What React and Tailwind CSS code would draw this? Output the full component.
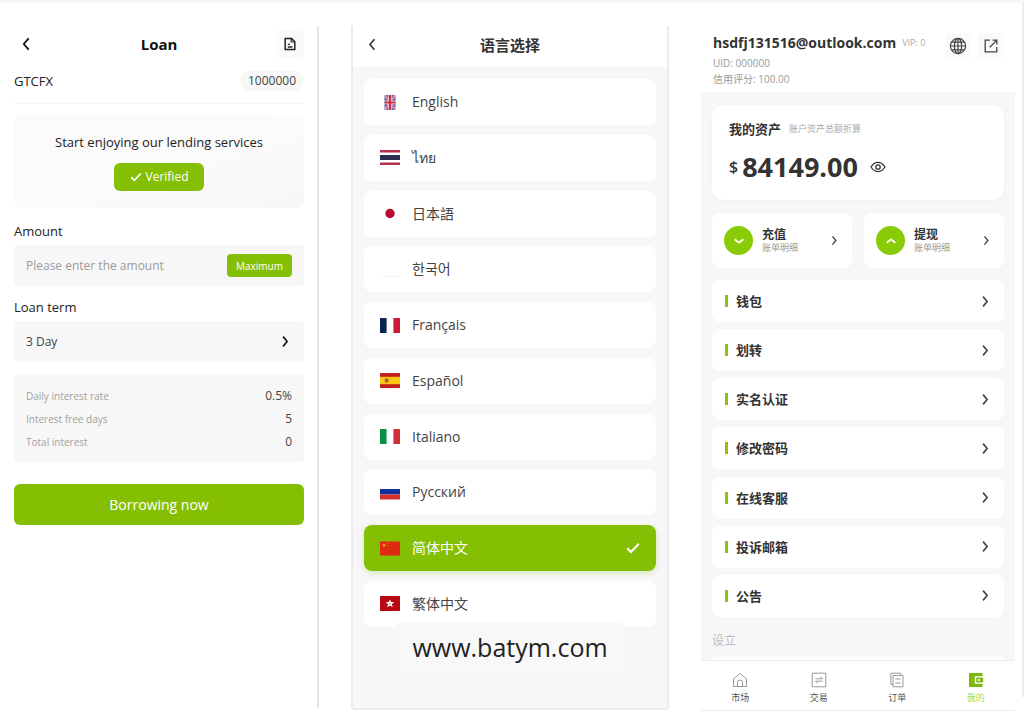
import React, { useState } from "react";

function Chevron({ dir = "right", className = "" }) {
  const d = {
    right: "M5 2 L10 8 L5 14",
    left: "M11 1.5 L5.5 8 L11 14.5",
    down: "M3 6 L8 10 L13 6",
    up: "M3 10 L8 6 L13 10",
  }[dir];
  return (
    <svg viewBox="0 0 16 16" fill="none" stroke="currentColor" strokeWidth="2" className={className} aria-hidden="true">
      <path d={d} />
    </svg>
  );
}

function Check({ className = "" }) {
  return (
    <svg viewBox="0 0 14 12" fill="none" stroke="currentColor" strokeWidth="2" className={className} aria-hidden="true">
      <path d="M1.2 6.2 L5 10 L12.8 1.8" />
    </svg>
  );
}

const flags = {
  en: (
    <g>
      <rect x="4.5" width="11" height="15" rx="1" fill="#5a5c9c" />
      <path d="M5 0.5 L15 14.5 M15 0.5 L5 14.5" stroke="#e9d3e0" strokeWidth="2" />
      <path d="M5 0.5 L15 14.5 M15 0.5 L5 14.5" stroke="#d65a72" strokeWidth="1" />
      <path d="M10 0 V15 M4.5 7.5 H15.5" stroke="#f6e6ea" strokeWidth="3.4" />
      <path d="M10 0 V15 M4.5 7.5 H15.5" stroke="#cf2f4c" strokeWidth="2.2" />
    </g>
  ),
  th: (
    <g>
      <rect width="20" height="2.5" fill="#b8324a" />
      <rect y="5" width="20" height="5" fill="#2d2f50" />
      <rect y="12.5" width="20" height="2.5" fill="#b8324a" />
    </g>
  ),
  ja: <circle cx="10" cy="7.5" r="4.7" fill="#bc0a34" />,
  ko: <rect y="14" width="20" height="1" fill="#f3f3f4" />,
  fr: (
    <g>
      <rect width="6.6" height="15" rx="0.6" fill="#0b2350" />
      <rect x="13.4" width="6.6" height="15" rx="0.6" fill="#ce1a38" />
    </g>
  ),
  es: (
    <g>
      <rect width="20" height="15" rx="0.8" fill="#c0201c" />
      <rect y="3.8" width="20" height="7.4" fill="#fbc514" />
      <rect x="4.6" y="5.4" width="4" height="4.2" rx="1" fill="#b9772a" />
      <rect x="5.8" y="6.4" width="1.4" height="2" fill="#7e4a22" />
    </g>
  ),
  it: (
    <g>
      <rect width="6.6" height="15" rx="0.6" fill="#0a8f47" />
      <rect x="13.4" width="6.6" height="15" rx="0.6" fill="#cd2f3c" />
    </g>
  ),
  ru: (
    <g>
      <rect y="4" width="20" height="5.5" fill="#10309a" />
      <rect y="9.5" width="20" height="5" fill="#d5312c" />
    </g>
  ),
  zh: (
    <g>
      <rect y="0.5" width="20" height="14" rx="0.6" fill="#dd2a11" />
      <path d="M4 2 l0.6 1.5 h1.6 l-1.3 1 l0.5 1.6 l-1.4 -0.9 l-1.4 0.9 l0.5 -1.6 l-1.3 -1 h1.6z" fill="#f7a51c" />
      <circle cx="7.4" cy="2" r="0.5" fill="#f7a51c" />
      <circle cx="8" cy="4.4" r="0.5" fill="#f7a51c" />
    </g>
  ),
  hk: (
    <g>
      <rect width="20" height="15" rx="0.6" fill="#b80a14" />
      <path d="M10 3.4 l1.2 2.7 l3 0.2 l-2.3 1.9 l0.8 3 l-2.7 -1.6 l-2.7 1.6 l0.8 -3 l-2.3 -1.9 l3 -0.2z" fill="#fff" />
      <circle cx="10" cy="7.7" r="0.8" fill="#c96a70" />
    </g>
  ),
};

const languages = [
  ["en", "English"],
  ["th", "ไทย"],
  ["ja", "日本語"],
  ["ko", "한국어"],
  ["fr", "Français"],
  ["es", "Español"],
  ["it", "Italiano"],
  ["ru", "Русский"],
  ["zh", "简体中文"],
  ["hk", "繁体中文"],
];

function LoanScreen() {
  const stats = [
    ["Daily interest rate", "0.5%"],
    ["Interest free days", "5"],
    ["Total interest", "0"],
  ];
  return (
    <section className="mb-[3px] flex flex-col border-r-2 border-[#e6e6e6] pl-[5px] pr-[13px] text-[13px] leading-5 text-[#222]">
      <header className="grid h-9 grid-cols-[28px_1fr_28px] items-center">
        <button aria-label="Back" className="pl-1 text-[#111]">
          <Chevron dir="left" className="h-[14px] w-4" />
        </button>
        <h1 className="text-center text-[15px] font-bold text-[#111]">Loan</h1>
        <button aria-label="Loan records" className="flex size-7 items-center justify-center rounded bg-[#fafafb] text-[#222]">
          <svg viewBox="0 0 14 14" className="size-[14px]" fill="none" stroke="currentColor" strokeWidth="1.5" strokeLinejoin="round">
            <path d="M2.2 1.4 H8.4 L11.8 4.8 V12.6 H2.2 Z" />
            <path d="M8.2 1.6 V5 H11.6" strokeWidth="1.1" />
            <path d="M4.8 7.4 H7 M4.8 10 H9.4" strokeWidth="1.3" />
          </svg>
        </button>
      </header>
      <div className="flex h-[42px] items-center justify-between border-b border-[#f5f5f5] pb-[3px]">
        <span>GTCFX</span>
        <span className="rounded-full bg-[#f7f7f7] px-2 text-[12px] text-[#444]">1000000</span>
      </div>
      <div className="mt-[11px] flex h-[93px] flex-col items-center justify-center gap-[11px] rounded-lg bg-linear-to-br from-[#fafafa] via-[#fbfbfb] to-[#f7f7f7] pb-px">
        <p>Start enjoying our lending services</p>
        <button className="flex h-7 items-center gap-1 rounded-md bg-[#85bf04] px-4 text-[12px] text-white">
          <Check className="h-[10px] w-3" />
          Verified
        </button>
      </div>
      <label htmlFor="amount" className="mt-[13px]">Amount</label>
      <div className="mt-1 flex h-[41px] items-center rounded bg-[#f7f7f7] pl-3 pr-3">
        <input id="amount" placeholder="Please enter the amount" className="w-0 grow bg-transparent text-[12px] outline-none placeholder:text-[#9b9b9b]" />
        <button className="h-[23px] rounded bg-[#85bf04] px-[9px] text-[10px] font-medium text-white">Maximum</button>
      </div>
      <label htmlFor="term" className="mt-[11px]">Loan term</label>
      <div className="mt-1 flex h-[41px] items-center rounded bg-[#f7f7f7] pl-3 pr-3">
        <select id="term" className="w-0 grow appearance-none bg-transparent text-[12px] text-[#444] outline-none">
          <option>3 Day</option>
        </select>
        <Chevron className="size-[13px] text-[#111]" />
      </div>
      <dl className="mt-3 flex h-[88px] flex-col justify-center gap-[3px] rounded bg-[#f7f7f7] px-3 pt-[2px]">
        {stats.map(([k, v]) => (
          <div key={k} className="flex items-center justify-between">
            <dt className="text-[10px] text-[#a0a0a0]">{k}</dt>
            <dd className="text-[12px] text-[#444]">{v}</dd>
          </div>
        ))}
      </dl>
      <button className="mt-[22px] h-[41px] rounded-md bg-[#85bf04] text-[14px] text-white">Borrowing now</button>
    </section>
  );
}

function LanguageScreen() {
  const [active, setActive] = useState("zh");
  return (
    <section className="relative mb-px flex flex-col rounded-b border-x-2 border-b-2 border-[#ebebee] bg-[#f7f7fa] text-[#444]">
      <header className="grid h-[41px] grid-cols-[38px_1fr_38px] items-center bg-white pb-1">
        <button aria-label="返回" className="flex justify-center text-[#333]">
          <Chevron dir="left" className="h-[13px] w-4" />
        </button>
        <h1 className="text-center text-[15px] font-bold leading-5 text-[#333]">语言选择</h1>
      </header>
      <ul className="flex grow flex-col justify-between px-[11px] pb-[81px] pt-3">
        {languages.map(([code, name]) => (
          <li key={code}>
            <button
              onClick={() => setActive(code)}
              className={
                code === active
                  ? "flex h-[46px] w-full items-center gap-3 rounded-lg bg-[#85bf04] pl-4 pr-4 text-[14px] text-white shadow-[0_2px_6px_rgba(133,191,4,0.3)]"
                  : "flex h-[46px] w-full items-center gap-3 rounded-lg bg-white pl-4 pr-4 text-[14px]"
              }
            >
              <svg viewBox="0 0 20 15" className="h-[15px] w-5" aria-hidden="true">{flags[code]}</svg>
              <span className="grow text-left leading-5">{name}</span>
              {code === active && <Check className="h-3 w-[14px]" />}
            </button>
          </li>
        ))}
      </ul>
      <div className="absolute inset-x-0 bottom-[37px] flex justify-center">
        <span className="rounded bg-[#f8f8f9] px-4 py-2 text-[25px] leading-8 text-[#222]">www.batym.com</span>
      </div>
    </section>
  );
}

function ActionCard({ dir, title }) {
  return (
    <button className="flex h-[55px] items-center rounded-lg bg-white pl-3 pr-3 text-left">
      <span className="flex size-[29px] items-center justify-center rounded-full bg-[#8acb08] text-white">
        <Chevron dir={dir} className="size-[14px]" />
      </span>
      <span className="ml-[9px] flex grow flex-col">
        <span className="text-[12px] font-bold leading-[14px] text-[#333]">{title}</span>
        <span className="text-[9px] leading-3 text-[#999]">账单明细</span>
      </span>
      <Chevron className="size-[11px] text-[#444]" />
    </button>
  );
}

const tabs = [
  ["市场", <path key="m" d="M1.5 7 L8 1.3 L14.5 7 V14.5 H1.5 Z M5.5 14.5 V10.2 Q5.5 8 8 8 Q10.5 8 10.5 10.2 V14.5" />],
  ["交易", <path key="j" d="M1.2 1.2 H14.8 V14.8 H1.2 Z M4.5 6.8 H11.5 L9.3 4.6 M11.5 9.2 H4.5 L6.7 11.4" />],
  ["订单", <path key="d" d="M4 3.5 H14 V14.8 H4 Z M4 12.5 H1.8 V1.2 H11.8 V3.5 M6.5 7 H11.5 M6.5 11 H11.5" />],
];

function AccountScreen() {
  const items = ["钱包", "划转", "实名认证", "修改密码", "在线客服", "投诉邮箱", "公告"];
  return (
    <section className="mt-[2px] flex flex-col bg-[#f7f7fa] text-[#333]">
      <header className="flex h-16 justify-between bg-white pl-3 pr-[11px] pt-[5px]">
        <div className="flex flex-col">
          <div className="flex items-center gap-[6px]">
            <h1 className="text-[14px] font-bold leading-5">hsdfj131516@outlook.com</h1>
            <span className="text-[9px] leading-4 text-[#aaa]">VIP: 0</span>
          </div>
          <p className="mt-[2px] text-[10px] leading-4 text-[#999]">UID: 000000</p>
          <p className="text-[10px] leading-4 text-[#999]">信用评分: 100.00</p>
        </div>
        <div className="flex gap-[7px]">
          <button aria-label="语言" className="flex size-[26px] items-center justify-center rounded bg-[#fafafa]">
            <svg viewBox="0 0 18 18" className="size-[18px]" fill="none" stroke="#444" strokeWidth="1.2">
              <circle cx="9" cy="9" r="7.6" />
              <ellipse cx="9" cy="9" rx="3.6" ry="7.6" />
              <path d="M9 1.4 V16.6 M1.4 9 H16.6 M2.6 5.2 H15.4 M2.6 12.8 H15.4" />
            </svg>
          </button>
          <button aria-label="退出" className="flex size-[26px] items-center justify-center rounded bg-[#fafafa]">
            <svg viewBox="0 0 14 14" className="size-[14px]" fill="none" stroke="#444" strokeWidth="1.3">
              <path d="M6 1.2 H1.2 V12.8 H12.8 V8 M8.6 1.2 H12.8 V5.4 M12.6 1.4 L5.8 8.2" />
            </svg>
          </button>
        </div>
      </header>
      <div className="flex grow flex-col px-[11px] pt-[13px]">
        <div className="flex h-[95px] flex-col rounded-xl bg-white px-[17px] pt-[14px] shadow-[0_1px_4px_rgba(0,0,0,0.03)]">
          <div className="flex items-center gap-2">
            <h2 className="text-[13px] font-bold leading-5">我的资产</h2>
            <span className="text-[9px] leading-5 text-[#aaa]">账户资产总额折算</span>
          </div>
          <div className="mt-3 flex items-center">
            <span className="text-[16px] font-semibold leading-8">$</span>
            <span className="ml-1 text-[27px] font-bold leading-8">84149.00</span>
            <button aria-label="隐藏余额" className="ml-3">
              <svg viewBox="0 0 16 12" className="h-3 w-4" fill="none" stroke="#333" strokeWidth="1.3">
                <path d="M1 6 Q4 1.4 8 1.4 Q12 1.4 15 6 Q12 10.6 8 10.6 Q4 10.6 1 6 Z" />
                <circle cx="8" cy="6" r="2.2" />
              </svg>
            </button>
          </div>
        </div>
        <div className="mt-[13px] grid grid-cols-2 gap-3">
          <ActionCard dir="down" title="充值" />
          <ActionCard dir="up" title="提现" />
        </div>
        <ul className="mt-3 flex grow flex-col justify-between">
          {items.map((t) => (
            <li key={t}>
              <button className="flex h-[42px] w-full items-center rounded-lg bg-white pl-[13px] pr-3">
                <span className="h-3 w-[3px] bg-[#8cc312]" />
                <span className="ml-2 grow text-left text-[13px] font-bold leading-5">{t}</span>
                <Chevron className="size-[13px] text-[#444]" />
              </button>
            </li>
          ))}
        </ul>
        <h3 className="mt-4 text-[12px] leading-4 text-[#bbb]">设立</h3>
        <div className="mt-2 h-[3px] rounded-t-lg bg-white" />
      </div>
      <nav className="grid h-[51px] grid-cols-4 border-y border-[#ececee] bg-white">
        {tabs.map(([label, icon]) => (
          <a key={label} href="#" className="flex flex-col items-center gap-1 pt-[11px] text-[9px] leading-3 text-[#555]">
            <svg viewBox="0 0 16 16" className="size-4" fill="none" stroke="#999" strokeWidth="1">{icon}</svg>
            {label}
          </a>
        ))}
        <a href="#" className="flex flex-col items-center gap-1 pt-[11px] text-[9px] leading-3 text-[#a6d84a]">
          <svg viewBox="0 0 16 16" className="size-4">
            <path d="M1 1 H14.5 V4.3 H6.8 V11.7 H14.5 V15 H1 Z" fill="#79b80c" />
            <path d="M8.2 5.6 H15.2 V10.4 H8.2 Z" fill="#79b80c" />
            <path d="M9.6 7.2 H12 V8.8 H9.6 Z" fill="#fff" />
          </svg>
          我的
        </a>
      </nav>
    </section>
  );
}

export default function App() {
  return (
    <div className="flex min-h-screen flex-col bg-white font-['Open_Sans','Noto_Sans_CJK_SC',sans-serif]">
      <div className="h-[3px] bg-[#f8f8f8]" />
      <div className="flex grow">
        <main className="grid grow grid-cols-[310fr_318fr_314fr] gap-8 pb-[2px] pl-[9px] pr-[7px] pt-[23px]">
          <LoanScreen />
          <LanguageScreen />
          <AccountScreen />
        </main>
        <div className="mb-4 w-[2px] bg-[#ececf0]" />
      </div>
    </div>
  );
}
